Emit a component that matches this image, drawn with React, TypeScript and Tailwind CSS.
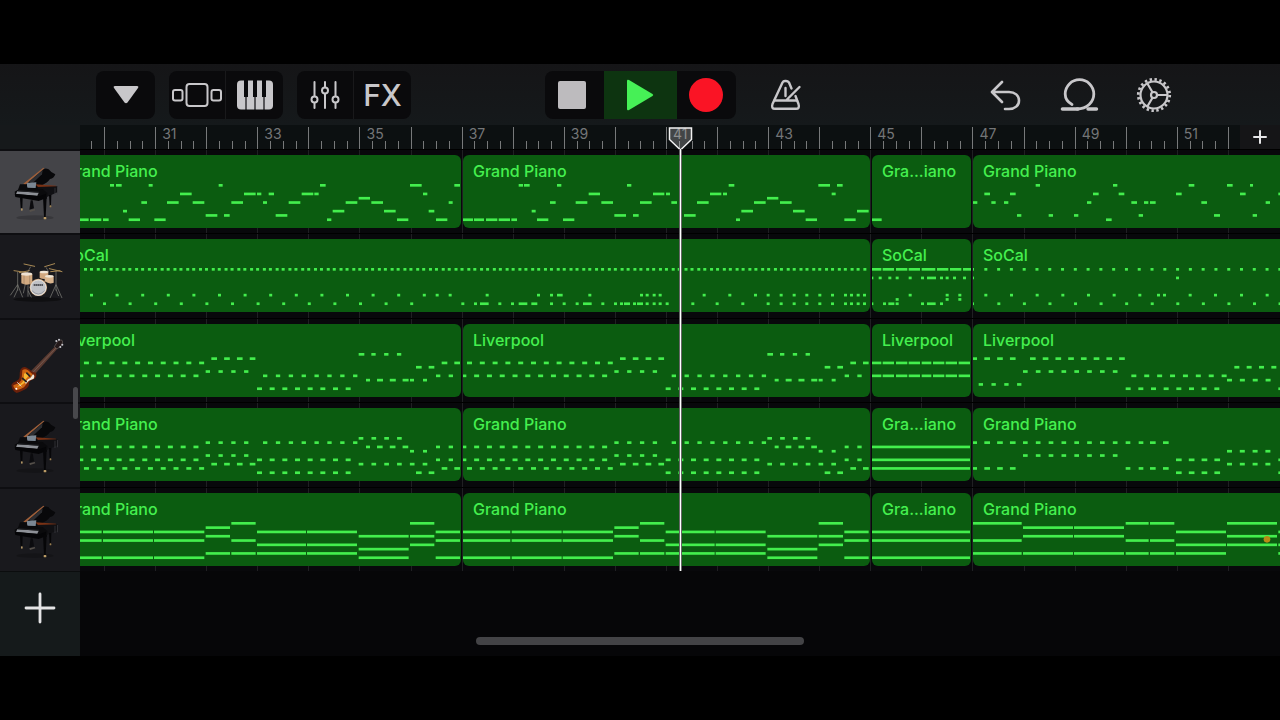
import type { ReactNode } from "react";

// Note positions are in ticks, three ticks to a pixel.
type Note = [lane: number, x: number, length: number];

const notes = (lane: number, length: number, ...xs: number[]): Note[] =>
  xs.map((x) => [lane, x, length]);

const every = (lane: number, length: number, from: number, count: number, step = 38.4): Note[] =>
  Array.from({ length: count }, (_, i) => [lane, from + i * step, length]);

const chord = (lanes: number[], x: number, length: number): Note[] =>
  lanes.map((lane) => [lane, x, length]);

const shift = (by: number, list: Note[]): Note[] =>
  list.map(([lane, x, length]) => [lane, x + by, length]);

const pianoIntro = [
  ...notes(0, 12, 90, 206, 416),
  ...notes(0, 17, 108, 720, 1123),
  ...notes(0, 35, 990),
  ...notes(2, 35, 300, 492, 665),
  ...notes(2, 13, 531, 703, 1029),
  ...notes(2, 16, 566),
  ...notes(3, 34, 836),
  ...notes(4, 17, 184),
  ...notes(4, 35, 261, 338, 454, 626, 797, 874),
  ...notes(4, 12, 549, 1106),
  ...notes(6, 12, 129),
  ...notes(6, 35, 758, 912),
  ...notes(6, 17, 1046),
  ...notes(7, 35, 377, 587),
  ...notes(7, 17, 432),
  ...notes(8, 34, -8, 30, 146, 223, 951, 1068),
  ...notes(8, 17, 69),
  ...notes(8, 13, 741),
];

const pianoVerse = [
  ...notes(0, 13, 176, 291, 501),
  ...notes(0, 17, 192, 806, 1131),
  ...notes(0, 35, 1075),
  ...notes(2, 34, 386, 579, 750),
  ...notes(2, 12, 618, 789, 1115),
  ...notes(3, 34, 921),
  ...notes(4, 17, 270, 634),
  ...notes(4, 35, 347, 424, 540, 711, 882, 960),
  ...notes(6, 12, 215),
  ...notes(6, 35, 844, 999, 1191),
  ...notes(7, 35, 463, 672),
  ...notes(7, 17, 519),
  ...notes(8, 30, 9, 42),
  ...notes(8, 34, 78, 116, 231, 309, 1037, 1153),
  ...notes(8, 17, 154),
  ...notes(8, 12, 828),
];

const pianoChorus = [
  ...notes(0, 13, 527, 759),
  ...notes(0, 17, 986, 1101),
  ...notes(0, 9, 1170),
  ...notes(2, 17, 373, 450, 699, 776, 948, 1140, 1255),
  ...notes(4, 13, 339, 394, 432, 681, 852, 1217),
  ...notes(4, 17, 814, 870, 1024),
  ...notes(7, 13, 471, 566, 642, 836, 1178),
  ...notes(7, 18, 1062),
  ...notes(8, 17, 738),
];

const drumVerse = [
  ...every(0, 9, 12, 62, 38.33),
  ...every(0, 9, 30, 61, 38.33),
  ...every(6, 9, 30, 14, 76.8),
  ...notes(6, 9, 1067, 1106),
  ...every(8, 9, 69, 13, 76.8),
  ...shift(1140, [
    ...notes(6, 9, 77, 231, 270, 385, 540, 557, 578, 596, 728, 805, 882, 920, 959, 998, 1036),
    ...notes(6, 9, 1075, 1113, 1152, 1170, 1190, 1209),
    ...notes(6, 17, 291),
    ...notes(8, 9, 4, 42, 115, 153, 270, 308, 347, 424, 462, 480, 519, 557, 578, 596, 617),
    ...notes(8, 9, 694, 767, 844, 920, 959, 998, 1036, 1075, 1113, 1152, 1170, 1190, 1209),
    ...notes(8, 26, 60, 176, 369),
    ...notes(8, 18, 214, 492, 531),
  ]),
];

const drumFill = [
  ...notes(0, 34, 68, 108, 146, 231, 270),
  ...notes(0, 29, 35, 309),
  ...notes(0, 41, 185),
  ...notes(2, 9, 31, 56, 85, 107, 146, 183, 240, 257, 279, 309),
  ...notes(2, 27, 201),
  ...notes(6, 9, 146, 257, 295),
  ...notes(7, 9, 107, 257, 295),
  ...notes(8, 9, 31, 69, 107, 183, 240),
  ...notes(8, 18, 85),
  ...notes(8, 26, 201),
];

const drumChorus = [
  ...chord([0, 2, 8], 333, 9),
  ...every(0, 9, 373, 24, 38.35),
  ...notes(2, 9, 948),
  ...every(6, 9, 373, 7, 77),
  ...notes(6, 9, 891, 909, 986, 1062, 1140, 1217),
  ...every(8, 9, 412, 12, 76.7),
];

const bassVerse = [
  ...every(2, 15, -65, 12),
  ...notes(2, 17, 1085, 1123),
  ...every(5, 15, -82, 12),
  ...every(5, 13, 549, 8, 38.6),
  ...notes(5, 13, 1068, 1106),
  ...every(1, 17, 394, 4),
  ...every(4, 13, 377, 4),
  ...every(8, 15, 531, 8, 38),
  ...notes(0, 17, 836),
  ...every(0, 13, 874, 3),
  ...notes(6, 12, 858, 990, 1029),
  ...every(6, 18, 891, 3),
  ...notes(3, 17, 1008, 1046),
];

const bassFill = [2, 5].flatMap((lane) => [
  ...notes(lane, 29, 35, 185),
  ...notes(lane, 34, 68, 108, 146, 219, 257, 296),
]);

const bassChorus = [
  ...notes(1, 12, 339),
  ...every(1, 17, 373, 3),
  ...every(1, 17, 510, 8, 38.2),
  ...every(7, 13, 356, 4),
  ...every(4, 14, 489, 8, 38.5),
  ...every(5, 15, 814, 8, 38.7),
  ...every(8, 15, 797, 8, 38),
  ...every(6, 15, 1101, 4, 38.6),
  ...every(3, 15, 1123, 4, 37),
  ...notes(8, 17, 1255),
];

const stabVerse = [
  ...every(2, 15, -82, 12),
  ...every(5, 15, -82, 12),
  ...every(7, 15, -65, 12),
  ...every(1, 13, 377, 4),
  ...every(4, 13, 377, 4),
  ...every(6, 17, 394, 4),
  ...every(1, 13, 549, 8, 38.6),
  ...every(5, 15, 531, 8, 38),
  ...every(8, 15, 531, 8, 38),
  ...every(0, 14, 836, 4),
  ...notes(2, 12, 858),
  ...every(2, 17, 891, 3),
  ...every(6, 14, 836, 6),
  ...notes(3, 12, 990, 1029),
  ...notes(8, 17, 1008, 1046),
  ...chord([2, 5], 1068, 12),
  ...chord([2, 5], 1106, 13),
  ...notes(7, 17, 1085, 1123),
];

const stabChorus = [
  ...notes(1, 12, 339),
  ...every(1, 17, 373, 3),
  ...every(1, 14, 489, 8, 38.5),
  ...notes(1, 14, 797, 836),
  ...notes(1, 17, 870, 909),
  ...every(4, 14, 489, 8, 38.5),
  ...notes(7, 12, 339),
  ...every(7, 17, 373, 3),
  ...notes(7, 14, 797, 836),
  ...notes(7, 17, 870, 909),
  ...every(5, 17, 948, 4),
  ...every(8, 17, 948, 4),
  ...every(3, 15, 1101, 4),
  ...every(6, 15, 1101, 4),
  ...chord([5, 8], 1255, 17),
];

const padVerse = [
  ...chord([2, 4, 8], -77, 142),
  ...chord([2, 4, 8], 69, 150),
  ...chord([2, 4, 8], 222, 151),
  ...chord([1, 3, 7], 377, 73),
  ...chord([0, 4, 7], 454, 73),
  ...chord([2, 5, 7], 531, 147),
  ...chord([2, 5, 7], 681, 150),
  ...chord([3, 6, 8], 836, 150),
  ...chord([0, 3, 5], 990, 73),
  ...chord([2, 4, 8], 1067, 73),
];

const padChorus = [
  ...chord([0, 4, 7], 339, 146),
  ...chord([1, 3, 7], 489, 150),
  ...chord([1, 3, 7], 642, 150),
  ...chord([0, 4, 7], 797, 69),
  ...chord([0, 4, 7], 870, 73),
  ...chord([2, 5, 7], 948, 150),
  ...chord([0, 3, 5], 1101, 150),
  ...chord([2, 5, 7], 1255, 150),
];

type Region = {
  label: string;
  size: string;
  // tick shown at the region's left edge
  origin: number;
  notes: Note[];
  marker?: boolean;
};

const LONG = "w-[407px] shrink-0";
const DOUBLE = "w-[816px] shrink-0";
const SHORT = "w-[99px] shrink-0";
const REST = "min-w-0 flex-1 rounded-r-none";

const Piano = () => (
  <svg viewBox="0 0 240 246" className="w-20" aria-hidden="true">
    <ellipse cx="105" cy="200" rx="56" ry="7" fill="#000" opacity="0.18" />
    <path d="M68 110 L128 57 Q134 49 146 55 Q152 64 166 70 Q162 82 150 84 Q142 96 122 104 L150 106 L160 112 L120 128 L60 120 Z" fill="#08080a" />
    <path d="M70 98 L130 50 L133 52 L76 101 Z" fill="#a0603a" />
    <path d="M86 92 L128 58 L126 70 L96 98 Z" fill="#2c2d31" />
    <path d="M106 100 L168 104 L170 110 L116 110 Z" fill="#7a3215" />
    <path d="M112 108 L172 106 L172 124 L136 140 L118 132 Z" fill="#101013" />
    <path d="M80 96 L109 94 L107 111 L82 110 Z" fill="#7b8793" />
    <path d="M60 100 L80 100 L82 112 L128 114 L142 126 L140 144 L46 134 L44 122 L54 116 Z" fill="#0a0a0c" />
    <path d="M52 121 L116 125 L112 134 L48 129 Z" fill="#8d9096" />
    <path d="M56 118 L118 122 L117 125 L53 121 Z" fill="#1f2023" />
    <path d="M44 128 L118 136 L138 128 L138 142 L116 150 L46 138 Z" fill="#050507" />
    <path d="M60 140 h8 l-1 32 h-5 Z M129 138 h11 l-3 60 h-5 Z M147 132 h7 l-1 32 h-4 Z" fill="#060608" />
    <path d="M164 110 h2 v22 h-2 Z M171 108 h2 v22 h-2 Z" fill="#3f3f44" />
    <path d="M92 148 L98 148 L102 172 L88 176 Z" fill="#0b0b0e" />
    <path d="M88 178 L104 174 L106 178 L90 183 Z" fill="#55504a" />
    <rect x="63" y="172" width="5" height="7" rx="2" fill="#b09464" />
    <rect x="131" y="198" width="8" height="7" rx="2" fill="#bb9c66" />
    <rect x="149" y="163" width="5" height="6" rx="2" fill="#9b7f50" />
  </svg>
);

const Drums = () => (
  <svg viewBox="0 0 240 246" className="w-20" aria-hidden="true">
    <ellipse cx="112" cy="190" rx="72" ry="7" fill="#000" opacity="0.4" />
    <g fill="none" stroke="#85857f" strokeWidth="2">
      <path d="M53 108 V164 M53 146 L31 178 M53 146 L68 184 M53 160 L42 184" />
      <path d="M168 104 V164 M168 146 L150 186 M168 146 L186 186 M168 160 L176 180" />
      <path d="M76 144 L70 172 M84 148 V182 M84 164 L94 184" />
      <path d="M92 92 L82 110 M138 94 L146 108" />
    </g>
    <g stroke="#a98a55" strokeWidth="3" strokeLinecap="round">
      <path d="M42 104 L76 109 M58 110 L88 104" />
      <path d="M72 84 L104 91 M134 92 L164 83" />
      <path d="M148 98 L186 107 M152 107 L180 104" />
    </g>
    <path d="M64 114 H97 V142 Q80 150 64 142 Z" fill="#d3ab82" />
    <path d="M72 114 v30 M89 114 v30" stroke="#9b7d60" strokeWidth="2" />
    <ellipse cx="80" cy="114" rx="17" ry="5" fill="#eee2d2" />
    <path d="M119 108 H145 V126 Q132 132 119 126 Z" fill="#d0a77f" />
    <ellipse cx="132" cy="108" rx="13" ry="4" fill="#efe4d4" />
    <path d="M134 121 H161 V140 Q148 146 134 136 Z" fill="#d8b48e" />
    <ellipse cx="148" cy="121" rx="13" ry="4" fill="#efe4d4" />
    <circle cx="115" cy="154" r="26" fill="#cfa57c" />
    <circle cx="115" cy="155" r="23" fill="#bfc1c6" stroke="#e5e3df" strokeWidth="3" />
    <path d="M101 147 H129" stroke="#34353b" strokeWidth="5" strokeDasharray="5 1" />
    <path d="M96 164 Q115 184 134 164" fill="none" stroke="#999ba2" strokeWidth="3" />
  </svg>
);

const Bass = () => (
  <svg viewBox="0 0 240 246" className="w-20" aria-hidden="true">
    <path d="M90 156 L166 79 L172 86 L100 168 Z" fill="#5b3b31" />
    <path d="M96 160 L168 84" stroke="#a8948b" strokeWidth="1" />
    <path d="M163 80 L173 64 Q176 59 185 60 L188 66 L184 77 L171 87 Z" fill="#23191a" stroke="#6d6460" strokeWidth="2" />
    <g fill="#c9c9cf">
      <circle cx="169" cy="63" r="3" />
      <circle cx="177" cy="59" r="3" />
      <circle cx="181" cy="81" r="3" />
      <circle cx="187" cy="74" r="3" />
    </g>
    <path d="M62 148 Q70 138 80 143 Q90 148 96 155 L108 158 Q112 172 101 178 Q88 181 87 190 Q88 201 76 208 Q61 216 50 219 Q36 213 34 195 Q37 187 48 184 Q59 179 59 168 Q58 156 62 148 Z" fill="#6a200a" />
    <path d="M67 151 Q75 144 84 151 L98 163 Q92 175 84 181 Q81 194 72 202 Q59 210 50 211 Q40 205 40 196 Q57 191 64 181 Q66 168 67 151 Z" fill="#cf6512" />
    <path d="M72 161 Q80 155 88 166 Q77 175 73 189 Q62 200 51 200 Q61 192 68 186 Q73 175 72 161 Z" fill="#f5b832" />
    <path d="M99 163 Q106 167 101 176 L87 182 L78 191 L74 188 Q86 175 91 174 Z" fill="#efe8d6" />
    <path d="M66 174 L80 186 M79 158 L91 170" stroke="#27201f" strokeWidth="5" />
    <path d="M52 187 L64 199" stroke="#d9d4c8" strokeWidth="3" />
    <circle cx="49" cy="206" r="3" fill="#fff" />
  </svg>
);

type Track = { name: string; icon: ReactNode; selected?: boolean; regions: Region[] };

const tracks: Track[] = [
  {
    name: "Grand Piano",
    icon: <Piano />,
    selected: true,
    regions: [
      { label: "Grand Piano", size: LONG, origin: -78, notes: pianoIntro },
      { label: "Grand Piano", size: LONG, origin: 9, notes: pianoVerse },
      { label: "Gra...iano", size: SHORT, origin: 36, notes: notes(8, 30, 35) },
      { label: "Grand Piano", size: REST, origin: 339, notes: pianoChorus },
    ],
  },
  {
    name: "SoCal",
    icon: <Drums />,
    regions: [
      { label: "SoCal", size: DOUBLE, origin: -78, notes: drumVerse },
      { label: "SoCal", size: SHORT, origin: 36, notes: drumFill },
      { label: "SoCal", size: REST, origin: 339, notes: drumChorus },
    ],
  },
  {
    name: "Liverpool",
    icon: <Bass />,
    regions: [
      { label: "Liverpool", size: LONG, origin: -78, notes: bassVerse },
      { label: "Liverpool", size: LONG, origin: -77, notes: bassVerse },
      { label: "Liverpool", size: SHORT, origin: 36, notes: bassFill },
      { label: "Liverpool", size: REST, origin: 339, notes: bassChorus },
    ],
  },
  {
    name: "Grand Piano",
    icon: <Piano />,
    regions: [
      { label: "Grand Piano", size: LONG, origin: -78, notes: stabVerse },
      { label: "Grand Piano", size: LONG, origin: -77, notes: stabVerse },
      { label: "Gra...iano", size: SHORT, origin: 36, notes: chord([2, 5, 7], 35, 295) },
      { label: "Grand Piano", size: REST, origin: 339, notes: stabChorus },
    ],
  },
  {
    name: "Grand Piano",
    icon: <Piano />,
    regions: [
      { label: "Grand Piano", size: LONG, origin: -78, notes: padVerse },
      { label: "Grand Piano", size: LONG, origin: -77, notes: padVerse },
      { label: "Gra...iano", size: SHORT, origin: 36, notes: chord([2, 4, 8], 35, 295) },
      { label: "Grand Piano", size: REST, origin: 339, notes: padChorus, marker: true },
    ],
  },
];

const bars = ["", "31", "33", "35", "37", "39", "41", "43", "45", "47", "49", "51"];

const RegionBlock = ({ region }: { region: Region }) => (
  <div className={`relative h-[73px] overflow-hidden rounded-md bg-[#0b5c10] ${region.size}`}>
    <svg className="absolute inset-0 h-full w-full" aria-hidden="true">
      <g transform="scale(0.33333)" fill="#43ee4d">
        {region.notes.map(([lane, x, length], i) => (
          <rect key={i} x={x - region.origin} y={87 + lane * 12.9} width={length} height="8" />
        ))}
        {region.marker && <circle cx={1221 - region.origin} cy="139" r="10" fill="#b88a14" />}
      </g>
    </svg>
    <span className="relative block px-2.5 pt-1 text-base leading-6 font-medium whitespace-nowrap text-[#45f04f]">
      {region.label}
    </span>
  </div>
);

const ToolButton = ({
  label,
  className = "w-[57px]",
  children,
}: {
  label: string;
  className?: string;
  children: ReactNode;
}) => (
  <button
    type="button"
    aria-label={label}
    className={`flex h-12 shrink-0 items-center justify-center text-[#c8c7ca] ${className}`}
  >
    {children}
  </button>
);

const Toolbar = () => (
  <header className="grid h-[61px] grid-cols-[1fr_auto_1fr] items-center bg-linear-to-b from-[#151517] to-[#15191b]">
    <div className="flex gap-3.5 pl-24">
      <div className="rounded-lg bg-[#0a0a0c]">
        <ToolButton label="Navigation" className="w-[59px]">
          <svg width="28" height="20" viewBox="0 0 28 20" fill="currentColor" aria-hidden="true">
            <path d="M3 1 H25 Q27 1 26 3 L15.500 17.500 Q14 19 12.500 17.500 L2 3 Q1 1 3 1 Z" />
          </svg>
        </ToolButton>
      </div>
      <div className="flex divide-x divide-[#19191b] overflow-hidden rounded-lg bg-[#0a0a0c]">
        <ToolButton label="Browser">
          <svg width="52" height="26" viewBox="0 0 52 26" fill="none" stroke="currentColor" strokeWidth="2" aria-hidden="true">
            <rect x="15.500" y="2" width="21" height="22" rx="3" />
            <rect x="2" y="8" width="9.500" height="10.500" rx="2" />
            <rect x="40.500" y="8" width="9.500" height="10.500" rx="2" />
          </svg>
        </ToolButton>
        <ToolButton label="Instrument">
          <svg width="36" height="30" viewBox="0 0 36 30" aria-hidden="true">
            <rect width="36" height="29" y="0.500" rx="4" fill="currentColor" />
            <path d="M9 16 V30 M18 16 V30 M27 16 V30" stroke="#0a0a0c" strokeWidth="1.200" />
            <path d="M7 0 H11 V17 H7 Z M16 0 H20 V17 H16 Z M25 0 H29 V17 H25 Z" fill="#0a0a0c" />
          </svg>
        </ToolButton>
      </div>
      <div className="flex divide-x divide-[#19191b] overflow-hidden rounded-lg bg-[#0a0a0c]">
        <ToolButton label="Track controls">
          <svg width="30" height="30" viewBox="0 0 30 30" fill="none" stroke="currentColor" strokeWidth="2" strokeLinecap="round" aria-hidden="true">
            <path d="M4.500 2 V16 M4.500 23 V28 M15 2 V7 M15 14 V28 M25.500 2 V16 M25.500 23 V28" />
            <circle cx="4.500" cy="19.500" r="3" />
            <circle cx="15" cy="10.500" r="3" />
            <circle cx="25.500" cy="19.500" r="3" />
          </svg>
        </ToolButton>
        <ToolButton label="FX">
          <span className="text-3xl leading-none font-medium">FX</span>
        </ToolButton>
      </div>
    </div>

    <div className="flex overflow-hidden rounded-lg bg-[#0a0a0c]">
      <ToolButton label="Stop" className="w-[59px] pr-1">
        <span className="block size-7 rounded-xs bg-[#bdbbbe]" />
      </ToolButton>
      <ToolButton label="Play" className="w-[73px] bg-[#0d3410]">
        <svg width="28" height="32" viewBox="0 0 28 32" fill="#46f056" aria-hidden="true">
          <path d="M1 2 Q1 0 3 1 L26.500 15 Q28 16 26.500 17 L3 31 Q1 32 1 30 Z" />
        </svg>
      </ToolButton>
      <ToolButton label="Record" className="w-[59px]">
        <span className="block size-[34px] rounded-full bg-[#fa1425]" />
      </ToolButton>
    </div>

    <div className="flex justify-between pr-24 pl-5">
      <ToolButton label="Metronome" className="w-[60px]">
        <svg width="32" height="32" viewBox="0 0 32 32" fill="none" stroke="currentColor" strokeWidth="2.400" strokeLinecap="round" strokeLinejoin="round" aria-hidden="true">
          <path d="M21.500 9.500 L19 3.500 Q17.800 2 16 2 H15 Q13.300 2 12.500 3.500 L2.500 25 Q1 29.800 5 29.800 H26 Q30 29.800 28.500 25 L25.500 17" />
          <path d="M4.500 21.500 H27 M17 20.500 L29.500 8" />
          <path d="M15.500 9 V17" />
        </svg>
      </ToolButton>
      <div className="flex gap-3.5">
        <ToolButton label="Undo" className="w-[60px]">
          <svg width="32" height="32" viewBox="0 0 32 32" fill="none" stroke="currentColor" strokeWidth="2.600" strokeLinecap="round" strokeLinejoin="round" aria-hidden="true">
            <path d="M12 3 L2 13 L12 23 M2.500 13 H19 C25 13 29 16.500 29 21.500 C29 26.500 25 30 19 30 H15" />
          </svg>
        </ToolButton>
        <ToolButton label="Loop" className="w-[60px]">
          <svg width="40" height="36" viewBox="0 0 40 36" fill="none" stroke="currentColor" strokeWidth="2.800" strokeLinecap="round" aria-hidden="true">
            <path d="M12 27.500 C7.500 25 5.200 21.500 5.200 17 A14.300 14.300 0 0 1 33.800 17 C33.800 25 27 32 17 32" />
            <path d="M2.500 32 H18" strokeWidth="3.600" />
            <path d="M28 32 H36.500" strokeWidth="3.400" />
          </svg>
        </ToolButton>
        <ToolButton label="Settings" className="w-[60px]">
          <svg width="36" height="36" viewBox="0 0 36 36" fill="none" stroke="currentColor" strokeWidth="2.200" aria-hidden="true">
            <circle cx="18" cy="18" r="13.500" />
            <circle cx="18" cy="18" r="15.700" strokeWidth="2.800" strokeDasharray="2.400 2.533" />
            <circle cx="18" cy="18" r="3" />
            <path d="M21 18 H31.500 M16.500 15.300 L11.200 6.300 M16.500 20.700 L11.200 29.700" />
          </svg>
        </ToolButton>
      </div>
    </div>
  </header>
);

const Ruler = () => (
  <div className="flex h-6 bg-[#0c1011]">
    <div className="z-10 w-20 shrink-0 bg-[#16191b]" />
    <div className="min-w-0 flex-1 overflow-hidden">
      <div className="-ml-[27px] grid h-full w-[1226px] grid-cols-12">
        {bars.map((bar, i) => (
          <div key={i} className="relative grid grid-cols-8 items-end">
            {Array.from({ length: 8 }, (_, tick) => (
              <i
                key={tick}
                className={`border-l border-[#77797a] ${tick % 4 ? "h-2" : "h-[22px]"}`}
              />
            ))}
            <span className="absolute top-0 left-[7px] text-sm leading-[17px] text-[#747678]">{bar}</span>
          </div>
        ))}
      </div>
    </div>
    <button
      type="button"
      aria-label="Add section"
      className="z-10 flex w-10 shrink-0 items-center justify-center bg-[#151517] text-[#e6e6e8]"
    >
      <svg width="14" height="14" viewBox="0 0 14 14" stroke="currentColor" strokeWidth="2" strokeLinecap="round" aria-hidden="true">
        <path d="M7 1 V13 M1 7 H13" />
      </svg>
    </button>
  </div>
);

const Playhead = () => (
  <div className="pointer-events-none absolute top-0 bottom-0 left-[588px] z-20 flex w-[25px] flex-col items-center">
    <svg width="25" height="26" viewBox="0 0 25 26" className="mt-0.5 shrink-0" aria-hidden="true">
      <path d="M1.500 1 H23.500 V12.500 L12.500 23 L1.500 12.500 Z" fill="#d0d0d0" fillOpacity="0.280" stroke="#f2f2f2" strokeWidth="1.500" />
    </svg>
    <div className="-mt-1 w-[3px] flex-1 border-x border-black/60 bg-white" />
  </div>
);

export default function App() {
  return (
    <div className="flex min-h-screen flex-col bg-black py-16 font-['Inter','Liberation_Sans',sans-serif]">
      <main className="relative flex flex-1 flex-col bg-[#060608]">
        <Toolbar />
        <div className="relative">
          <Ruler />
          <div className="flex h-[422px]">
            <nav aria-label="Tracks" className="relative grid w-20 shrink-0 grid-rows-5">
              {tracks.map((track, i) => (
                <button
                  key={i}
                  type="button"
                  aria-label={track.name}
                  className={`flex items-center overflow-hidden border-t-2 border-[#0e0e11] ${
                    track.selected ? "bg-[#444448]" : "bg-[#19191d]"
                  }`}
                >
                  {track.icon}
                </button>
              ))}
              <span className="absolute top-[238px] right-0.5 h-8 w-[5px] rounded-full bg-[#48484c]" />
            </nav>
            <div className="relative min-w-0 flex-1 overflow-hidden bg-[#08080b]">
              <div className="absolute inset-y-0 -left-[27px] grid w-[1226px] grid-cols-24">
                {Array.from({ length: 24 }, (_, i) => (
                  <i key={i} className="border-l border-[#202023]" />
                ))}
              </div>
              <div className="relative -ml-[26px] grid h-full grid-rows-5">
                {tracks.map((track, i) => (
                  <div key={i} className="flex min-w-0 gap-0.5 border-t border-black pt-[5px]">
                    {track.regions.map((region, j) => (
                      <RegionBlock key={j} region={region} />
                    ))}
                  </div>
                ))}
              </div>
            </div>
          </div>
          <div className="absolute inset-y-0 right-0 left-20">
            <Playhead />
          </div>
        </div>
        <div className="flex flex-1">
          <button
            type="button"
            aria-label="Add track"
            className="flex min-h-[84px] w-20 shrink-0 justify-center border-t border-[#0b0d0e] bg-[#151a1b] pt-5 text-[#e4e4e5]"
          >
            <svg width="32" height="32" viewBox="0 0 32 32" stroke="currentColor" strokeWidth="2.800" strokeLinecap="round" aria-hidden="true">
              <path d="M16 2 V30 M2 16 H30" />
            </svg>
          </button>
        </div>
        <div className="absolute bottom-[11px] left-1/2 h-2 w-[328px] -translate-x-1/2 rounded-full bg-[#434346]" />
      </main>
    </div>
  );
}
